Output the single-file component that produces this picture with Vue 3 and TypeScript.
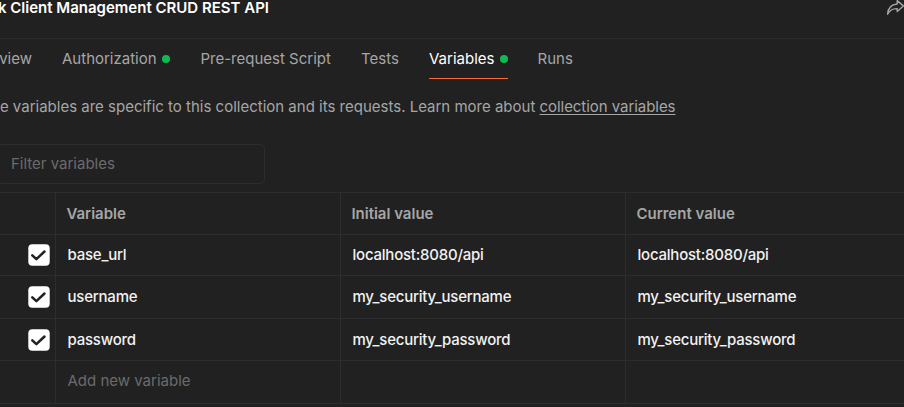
<script setup lang="ts">
interface Tab {
  label: string
  cls: string
  dot?: boolean
  active?: boolean
}
interface Variable {
  name: string
  value: string
}

const tabs: Tab[] = [
  { label: 'view', cls: 'overview' },
  { label: 'Authorization', cls: 'auth', dot: true },
  { label: 'Pre-request Script', cls: 'script' },
  { label: 'Tests', cls: 'tests' },
  { label: 'Variables', cls: 'vars', dot: true, active: true },
  { label: 'Runs', cls: 'runs' },
]

const variables: Variable[] = [
  { name: 'base_url', value: 'localhost:8080/api' },
  { name: 'username', value: 'my_security_username' },
  { name: 'password', value: 'my_security_password' },
]
</script>

<template>
  <main class="pane">
    <header class="top">
      <h1>k Client Management CRUD REST API</h1>
      <svg class="share" width="19" height="18" viewBox="0 0 19 18">
        <path d="M11.2 0.6 L17.4 5.9 L11.2 11.6 V8.6 C6.5 8.4 3.6 10.2 1.6 14.2 C2 8.4 5.4 4.4 11.2 4 Z" />
      </svg>
    </header>
    <nav class="tabs">
      <div v-for="t in tabs" :key="t.label" class="tab" :class="[t.cls, { active: t.active }]">
        <span>{{ t.label }}</span>
        <i v-if="t.dot" class="dot"></i>
      </div>
    </nav>
    <p class="hint"><span>e variables are specific to this collection and its requests. Learn more about <a>collection variables</a></span></p>
    <div class="filter">Filter variables</div>
    <section class="table">
      <div class="row head">
        <div class="cell"></div>
        <div class="cell">Variable</div>
        <div class="cell">Initial value</div>
        <div class="cell">Current value</div>
      </div>
      <div v-for="v in variables" :key="v.name" class="row">
        <div class="cell check">
          <svg width="22" height="22" viewBox="0 0 22 22">
            <rect x="0.3" y="0.3" width="21.4" height="21.4" rx="4" />
            <path d="M4.3 11.3 L8.4 15.2 L16.5 7.5" />
          </svg>
        </div>
        <div class="cell">{{ v.name }}</div>
        <div class="cell">{{ v.value }}</div>
        <div class="cell">{{ v.value }}</div>
      </div>
      <div class="row add">
        <div class="cell"></div>
        <div class="cell">Add new variable</div>
        <div class="cell"></div>
        <div class="cell"></div>
      </div>
    </section>
  </main>
</template>

<style>
body {
  margin: 0;
  background: #212121;
}
</style>

<style scoped>
.pane {
  box-sizing: border-box;
  width: 904px;
  height: 407px;
  overflow: hidden;
  background: #212121;
  color: #a6a6a6;
  font: 400 15px/20px Inter, sans-serif;
  white-space: nowrap;
}
.top {
  box-sizing: border-box;
  height: 39px;
  display: flex;
  justify-content: space-between;
  border-bottom: 1px solid #2b2b2b;
}
h1 {
  margin: -2px 0 0 -2px;
  color: #fff;
  font-size: 15px;
  font-weight: 600;
  line-height: 20px;
}
.share {
  margin-right: -1px;
  fill: none;
  stroke: #a6a6a6;
  stroke-width: 1.4;
  stroke-linejoin: round;
}
.tabs {
  display: flex;
  height: 40px;
}
.tab {
  box-sizing: border-box;
  display: flex;
  align-items: center;
  justify-content: space-between;
  flex-shrink: 0;
  margin-right: 30px;
}
.overview {
  width: 32px;
  justify-content: flex-end;
}
.auth {
  width: 108px;
  margin-right: 30.5px;
}
.script {
  width: 130.5px;
}
.tests {
  width: 38px;
}
.vars {
  width: 79px;
}
.runs {
  margin-left: -0.5px;
}
.active {
  color: #fff;
  box-shadow: inset 0 -1px #ff6c37;
}
.dot {
  width: 8px;
  height: 8px;
  border-radius: 50%;
  background: #0cbb52;
}
.hint {
  display: flex;
  justify-content: flex-end;
  width: 675.5px;
  margin: 18px 0 0;
}
.hint a {
  letter-spacing: -0.05px;
  text-decoration: underline;
  text-underline-offset: 2px;
}
.filter {
  box-sizing: border-box;
  width: 269px;
  height: 40px;
  margin: 27px 0 8px -4px;
  padding: 9px 14px;
  border: 1px solid #2d2d2d;
  border-radius: 5px;
  color: #6b6b6b;
}
.table {
  display: grid;
  grid-template-rows: 42px 41px 43px 42px 42px;
  border-top: 1px solid #2d2d2d;
  border-bottom: 1px solid #2d2d2d;
}
.row {
  display: grid;
  grid-template-columns: 55px 285px 285px 1fr;
  border-bottom: 1px solid #2d2d2d;
  color: #f2f2f2;
  font-weight: 500;
  letter-spacing: -0.22px;
}
.row:last-child {
  border-bottom: 0;
}
.cell {
  display: flex;
  align-items: center;
  padding-left: 11.5px;
  border-left: 1px solid #2d2d2d;
}
.cell:first-child {
  padding-left: 28px;
  border-left: 0;
}
.head {
  color: #a6a6a6;
  font-weight: 600;
  letter-spacing: 0;
}
.head .cell {
  padding-left: 10.4px;
}
.add {
  color: #6b6b6b;
  font-weight: 400;
  letter-spacing: 0;
}
.add .cell {
  padding-bottom: 2px;
}
.check rect {
  fill: #fff;
}
.check path {
  fill: none;
  stroke: #212121;
  stroke-width: 2.5;
  stroke-linecap: round;
  stroke-linejoin: round;
}
</style>
